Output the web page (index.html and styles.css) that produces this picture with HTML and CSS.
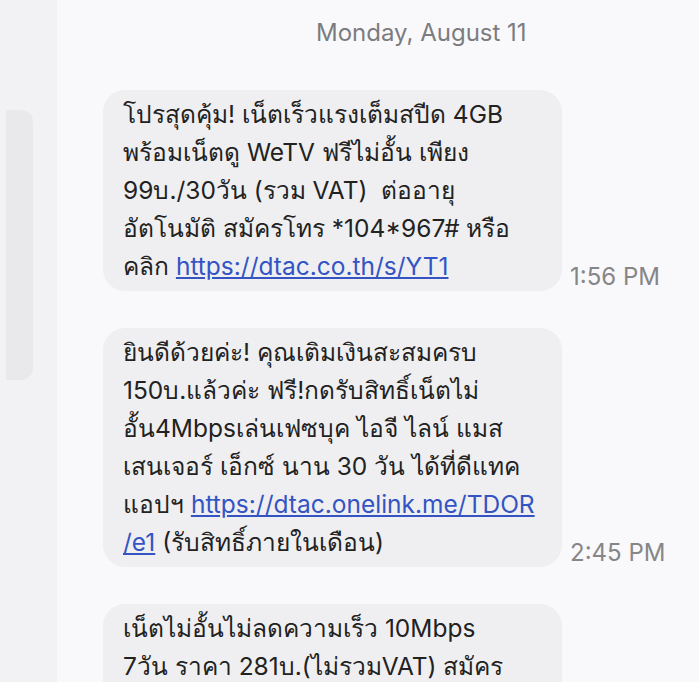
FILE: index.html
```html
<!DOCTYPE html>
<html lang="th">
<head>
    <meta charset="UTF-8">
    <meta name="viewport" content="width=device-width, initial-scale=1.0">
    <title>Messages</title>
    <link rel="stylesheet" href="styles.css">
</head>
<body>
    <!-- Colonna laterale con la barra di scorrimento -->
    <aside class="rail">
        <div class="rail-thumb"></div>
    </aside>

    <!-- Conversazione -->
    <main class="thread">
        <div class="day">Monday, August 11</div>

        <div class="msg">
            <div class="bubble">
                โปรสุดคุ้ม! เน็ตเร็วแรงเต็มสปีด 4GB<br>
                พร้อมเน็ตดู WeTV ฟรีไม่อั้น เพียง<br>
                99บ./30วัน (รวม VAT)&nbsp; ต่ออายุ<br>
                อัตโนมัติ สมัครโทร *104*967# หรือ<br>
                คลิก <a href="#">https://dtac.co.th/s/YT1</a>
            </div>
            <span class="time">1:56 PM</span>
        </div>

        <div class="msg">
            <div class="bubble">
                ยินดีด้วยค่ะ! คุณเติมเงินสะสมครบ<br>
                150บ.แล้วค่ะ ฟรี!กดรับสิทธิ์เน็ตไม่<br>
                อั้น4Mbpsเล่นเฟซบุค ไอจี ไลน์ แมส<br>
                เสนเจอร์ เอ็กซ์ นาน 30 วัน ได้ที่ดีแทค<br>
                แอปฯ <a href="#">https://dtac.onelink.me/TDOR<br>/e1</a> (รับสิทธิ์ภายในเดือน)
            </div>
            <span class="time">2:45 PM</span>
        </div>

        <div class="msg">
            <div class="bubble">
                เน็ตไม่อั้นไม่ลดความเร็ว 10Mbps<br>
                7วัน ราคา 281บ.(ไม่รวมVAT) สมัคร<br>
                กด *104*281# โทรออก หรือคลิก<br>
                <a href="#">https://dtac.co.th/s/YT2</a>
            </div>
            <span class="time">4:10 PM</span>
        </div>
    </main>
</body>
</html>
```

FILE: styles.css
```css
body {
    margin: 0;
    padding: 0;
    height: 682px;
    overflow: hidden;
    display: flex;
    background-color: #f9f9fb;
    font-family: Inter, "Noto Sans", "Liberation Sans", sans-serif;
    color: #222;
}

.rail {
    width: 57px;
    flex-shrink: 0;
    background-color: #f2f2f4;
}

.rail-thumb {
    margin: 110px 0 0 6px;
    width: 27px;
    height: 270px;
    background-color: #e9e9eb;
    border-radius: 0 12px 12px 0;
}

.thread {
    flex: 1;
    padding-top: 18px;
}

.day {
    padding-left: 259px;
    font-size: 24px;
    line-height: 30px;
    color: #7c7c7e;
    margin-bottom: 42px;
}

.msg {
    display: flex;
    align-items: flex-end;
    gap: 8px;
    margin: 0 0 37px 46px;
}

.bubble {
    width: 419px;
    padding: 5px 20px 6px;
    background-color: #efeff1;
    border-radius: 22px;
    font-size: 24.5px;
    line-height: 38px;
    white-space: nowrap;
}

.bubble a {
    color: #3454c4;
    text-decoration: underline;
}

.time {
    font-size: 24px;
    color: #868688;
    padding-bottom: 0;
}
```
